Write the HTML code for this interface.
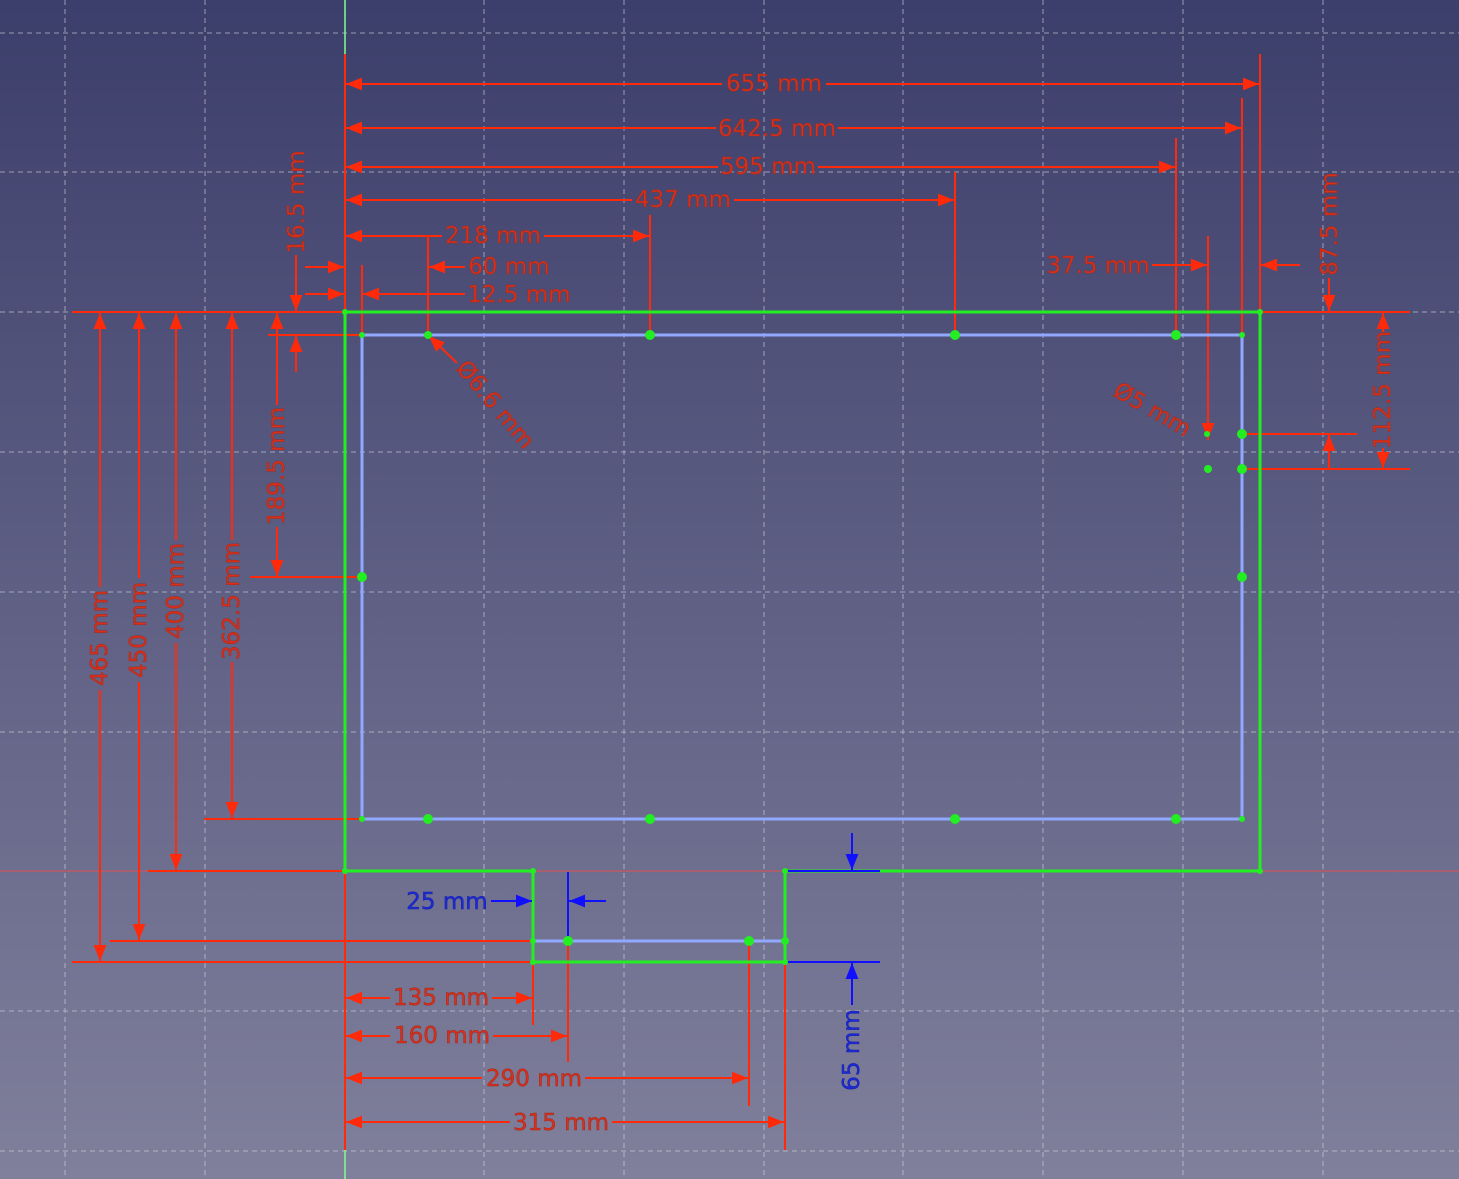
<!DOCTYPE html>
<html><head><meta charset="utf-8"><style>
html,body{margin:0;padding:0;width:1459px;height:1179px;overflow:hidden}
svg{display:block}
text{font-family:"DejaVu Sans","Liberation Sans",sans-serif;font-size:23px}
.r{fill:#d8301a;stroke:#a02a20;stroke-width:0.5}
.b{fill:#1a2ad8;stroke:#1a20a0;stroke-width:0.5}
</style></head><body>
<svg width="1459" height="1179" viewBox="0 0 1459 1179" xmlns="http://www.w3.org/2000/svg">
<defs>
<linearGradient id="bg" x1="0" y1="0" x2="0" y2="1">
<stop offset="0" stop-color="#3c3e6b"/><stop offset="1" stop-color="#80809c"/>
</linearGradient>
<marker id="a" viewBox="0 0 10 10" refX="10" refY="5" markerWidth="16" markerHeight="16" markerUnits="userSpaceOnUse" orient="auto"><path d="M0,1 L10,5 L0,9z" fill="#ff2a0a"/></marker>
<marker id="ab" viewBox="0 0 10 10" refX="10" refY="5" markerWidth="16" markerHeight="16" markerUnits="userSpaceOnUse" orient="auto"><path d="M0,1 L10,5 L0,9z" fill="#1010ff"/></marker>
</defs>
<rect width="1459" height="1179" fill="url(#bg)"/>
<g stroke="#d8d8e0" stroke-width="1" stroke-dasharray="5,4" opacity="0.6">
<line x1="65" y1="0" x2="65" y2="1179"/><line x1="205" y1="0" x2="205" y2="1179"/>
<line x1="484" y1="0" x2="484" y2="1179"/><line x1="624" y1="0" x2="624" y2="1179"/>
<line x1="764" y1="0" x2="764" y2="1179"/><line x1="903" y1="0" x2="903" y2="1179"/>
<line x1="1043" y1="0" x2="1043" y2="1179"/><line x1="1183" y1="0" x2="1183" y2="1179"/>
<line x1="1323" y1="0" x2="1323" y2="1179"/>
<line x1="0" y1="33" x2="1459" y2="33"/><line x1="0" y1="172" x2="1459" y2="172"/>
<line x1="0" y1="312" x2="1459" y2="312"/><line x1="0" y1="452" x2="1459" y2="452"/>
<line x1="0" y1="592" x2="1459" y2="592"/><line x1="0" y1="732" x2="1459" y2="732"/>
<line x1="0" y1="1011" x2="1459" y2="1011"/><line x1="0" y1="1151" x2="1459" y2="1151"/>
</g>
<line x1="0" y1="871" x2="1459" y2="871" stroke="#e05050" stroke-width="1"/>
<line x1="345" y1="0" x2="345" y2="54" stroke="#80ff90" stroke-width="1.5"/>
<line x1="345" y1="1150" x2="345" y2="1179" stroke="#80ff90" stroke-width="1.5"/>

<g stroke="#ff2a0a" stroke-width="2" fill="none">
<line x1="345" y1="54" x2="345" y2="1150"/>
<line x1="1260" y1="54" x2="1260" y2="312"/>
<line x1="1242" y1="98" x2="1242" y2="335"/>
<line x1="1176" y1="138" x2="1176" y2="335"/>
<line x1="955" y1="172" x2="955" y2="335"/>
<line x1="650" y1="215" x2="650" y2="335"/>
<line x1="428" y1="237" x2="428" y2="335"/>
<line x1="362" y1="265" x2="362" y2="335"/>
<line x1="1208" y1="236" x2="1208" y2="440"/>
<line x1="72" y1="312" x2="1410" y2="312"/>
<line x1="72" y1="962" x2="533" y2="962"/>
<line x1="110" y1="941" x2="533" y2="941"/>
<line x1="148" y1="871" x2="345" y2="871"/>
<line x1="204" y1="819" x2="362" y2="819"/>
<line x1="250" y1="577" x2="362" y2="577"/>
<line x1="268" y1="335" x2="362" y2="335"/>
<line x1="1242" y1="434" x2="1357" y2="434"/>
<line x1="1242" y1="469" x2="1410" y2="469"/>
<line x1="533" y1="962" x2="533" y2="1025"/>
<line x1="568" y1="941" x2="568" y2="1062"/>
<line x1="749" y1="941" x2="749" y2="1106"/>
<line x1="785" y1="962" x2="785" y2="1150"/>
</g>

<g fill="none" stroke-width="3">
<path d="M345,312 H1260 V871 H785 V962 H533 V871 H345 Z" stroke="#22ee22"/>
<path d="M362,335 H1242 V819 H362 Z" stroke="#90a8ff"/>
<line x1="533" y1="941" x2="785" y2="941" stroke="#90a8ff"/>
</g>

<g stroke="#ff2a0a" stroke-width="2" marker-end="url(#a)">
<line x1="722" y1="84" x2="346" y2="84"/><line x1="826" y1="84" x2="1259" y2="84"/>
<line x1="716" y1="128" x2="346" y2="128"/><line x1="838" y1="128" x2="1241" y2="128"/>
<line x1="718" y1="167" x2="346" y2="167"/><line x1="818" y1="167" x2="1175" y2="167"/>
<line x1="632" y1="200" x2="346" y2="200"/><line x1="734" y1="200" x2="954" y2="200"/>
<line x1="442" y1="236" x2="346" y2="236"/><line x1="544" y1="236" x2="649" y2="236"/>
<line x1="465" y1="267" x2="429" y2="267"/><line x1="305" y1="267" x2="344" y2="267"/>
<line x1="465" y1="294" x2="363" y2="294"/><line x1="305" y1="294" x2="344" y2="294"/>
<line x1="1152" y1="265" x2="1207" y2="265"/><line x1="1300" y1="265" x2="1261" y2="265"/>
<line x1="390" y1="998" x2="346" y2="998"/><line x1="492" y1="998" x2="532" y2="998"/>
<line x1="390" y1="1036" x2="346" y2="1036"/><line x1="493" y1="1036" x2="567" y2="1036"/>
<line x1="482" y1="1078" x2="346" y2="1078"/><line x1="585" y1="1078" x2="748" y2="1078"/>
<line x1="510" y1="1122" x2="346" y2="1122"/><line x1="612" y1="1122" x2="784" y2="1122"/>
</g>
<g stroke="#ff2a0a" stroke-width="2" marker-end="url(#a)">
<line x1="100" y1="587" x2="100" y2="313"/><line x1="100" y1="690" x2="100" y2="961"/>
<line x1="139" y1="578" x2="139" y2="313"/><line x1="139" y1="682" x2="139" y2="940"/>
<line x1="176" y1="540" x2="176" y2="313"/><line x1="176" y1="643" x2="176" y2="870"/>
<line x1="232" y1="540" x2="232" y2="313"/><line x1="232" y1="662" x2="232" y2="818"/>
<line x1="277" y1="405" x2="277" y2="313"/><line x1="277" y1="527" x2="277" y2="576"/>
<line x1="296" y1="255" x2="296" y2="311"/><line x1="296" y1="372" x2="296" y2="336"/>
<line x1="1329" y1="278" x2="1329" y2="311"/><line x1="1383" y1="332" x2="1383" y2="313"/>
<line x1="1383" y1="448" x2="1383" y2="468"/><line x1="1329" y1="469" x2="1329" y2="435"/>
<line x1="457" y1="363" x2="429" y2="336"/>
<line x1="1208" y1="410" x2="1208" y2="439"/>
</g>
<g stroke="#1010ff" stroke-width="2" fill="none">
<line x1="568" y1="872" x2="568" y2="941"/>
<line x1="785" y1="871" x2="880" y2="871"/>
<line x1="785" y1="962" x2="880" y2="962"/>
</g>
<g stroke="#1010ff" stroke-width="2" marker-end="url(#ab)">
<line x1="491" y1="901" x2="532" y2="901"/><line x1="606" y1="901" x2="569" y2="901"/>
<line x1="852" y1="833" x2="852" y2="870"/><line x1="852" y1="1005" x2="852" y2="963"/>
</g>

<g fill="#22ee22">
<circle cx="345" cy="312" r="3"/><circle cx="1260" cy="312" r="3"/><circle cx="345" cy="871" r="3"/><circle cx="1260" cy="871" r="3"/>
<circle cx="362" cy="335" r="3"/><circle cx="1242" cy="335" r="3"/><circle cx="362" cy="819" r="3"/><circle cx="1242" cy="819" r="3"/>
<circle cx="428" cy="335" r="4"/><circle cx="650" cy="335" r="5"/><circle cx="955" cy="335" r="5"/><circle cx="1176" cy="335" r="5"/>
<circle cx="428" cy="819" r="5"/><circle cx="650" cy="819" r="5"/><circle cx="955" cy="819" r="5"/><circle cx="1176" cy="819" r="5"/>
<circle cx="362" cy="577" r="5"/><circle cx="1242" cy="577" r="5"/><circle cx="1242" cy="434" r="5"/><circle cx="1242" cy="469" r="5"/>
<circle cx="1208" cy="469" r="4"/><circle cx="1207" cy="434" r="3"/>
<circle cx="533" cy="871" r="3"/><circle cx="785" cy="871" r="3"/><circle cx="533" cy="962" r="3"/><circle cx="785" cy="962" r="3"/>
<circle cx="533" cy="941" r="3"/><circle cx="785" cy="941" r="4"/><circle cx="568" cy="941" r="5"/><circle cx="749" cy="941" r="5"/>
</g>

<g class="r" text-anchor="middle" dominant-baseline="central">
<text x="774" y="84">655 mm</text>
<text x="777" y="129">642.5 mm</text>
<text x="768" y="167">595 mm</text>
<text x="683" y="200">437 mm</text>
<text x="493" y="236">218 mm</text>
<text x="509" y="267">60 mm</text>
<text x="519" y="295">12.5 mm</text>
<text x="1098" y="266">37.5 mm</text>
<text x="441" y="998">135 mm</text>
<text x="442" y="1036">160 mm</text>
<text x="534" y="1079">290 mm</text>
<text x="561" y="1123">315 mm</text>
<text transform="translate(100,638) rotate(-90)">465 mm</text>
<text transform="translate(139,630) rotate(-90)">450 mm</text>
<text transform="translate(176,591) rotate(-90)">400 mm</text>
<text transform="translate(232,601) rotate(-90)">362.5 mm</text>
<text transform="translate(277,466) rotate(-90)">189.5 mm</text>
<text transform="translate(297,202) rotate(-90)">16.5 mm</text>
<text transform="translate(1330,224) rotate(-90)">87.5 mm</text>
<text transform="translate(1383,390) rotate(-90)">112.5 mm</text>
<text transform="translate(495,405) rotate(50)">Ø6.6 mm</text>
<text transform="translate(1152,410) rotate(30)">Ø5 mm</text>
</g>
<g class="b" text-anchor="middle" dominant-baseline="central">
<text x="447" y="902">25 mm</text>
<text transform="translate(852,1050) rotate(-90)">65 mm</text>
</g>
</svg>
</body></html>
